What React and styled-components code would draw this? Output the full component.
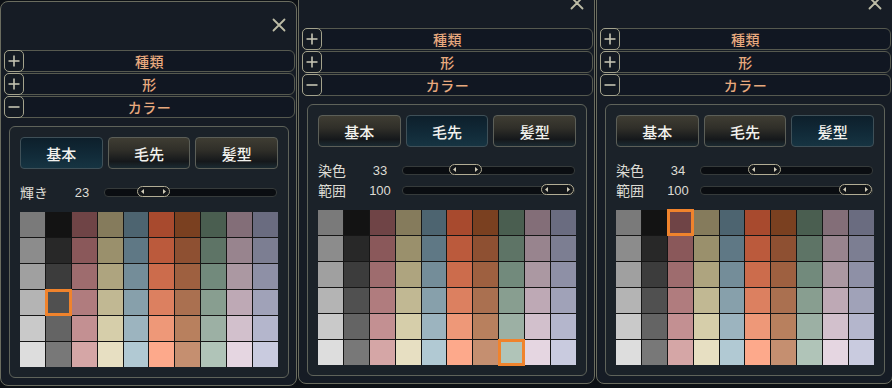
import React from 'react'
import styled, { createGlobalStyle } from 'styled-components'

const GlobalStyle = createGlobalStyle`
  html, body {
    margin: 0;
    padding: 0;
    background: #0c1015;
    overflow: hidden;
  }
  body {
    font-family: "Noto Sans CJK JP", "Noto Sans", sans-serif;
  }
`

// columns of the colour grid, dark to light top to bottom
const palette = [
  ['#7a7a7a', '#8c8c8c', '#a0a0a0', '#b4b4b4', '#c9c9c9', '#dddddd'],
  ['#131313', '#282828', '#3c3c3c', '#505050', '#646464', '#787878'],
  ['#6f4446', '#8a585a', '#9e6c6e', '#b07c7e', '#c39092', '#d5a6a6'],
  ['#857b5c', '#9a906c', '#aea47f', '#c1b893', '#d6ceaa', '#e7dfc2'],
  ['#4d6470', '#5f7885', '#748d99', '#87a0ab', '#9cb4bf', '#b1c9d3'],
  ['#a84a2e', '#bb5a3c', '#cc6c4c', '#dc8060', '#ee9878', '#fda98b'],
  ['#7a4020', '#8e5032', '#9e6040', '#aa7050', '#b8805e', '#c58f70'],
  ['#4a5e50', '#5e7466', '#728a7c', '#889e90', '#9cb0a4', '#b0c4b8'],
  ['#836e78', '#98848e', '#ab98a2', '#bea9b5', '#d2c0cc', '#e5d6e1'],
  ['#6a6c80', '#7c7e92', '#8e90a6', '#a0a2b8', '#b4b6cc', '#c9cbdf'],
]

const sections = ['種類', '形', 'カラー']
const tabs = ['基本', '毛先', '髪型']

const panels = [
  { shift: 0, tab: 0, sliders: [{ label: '輝き', value: 23 }], selected: [3, 1] },
  {
    shift: -22,
    tab: 1,
    sliders: [
      { label: '染色', value: 33 },
      { label: '範囲', value: 100 },
    ],
    selected: [5, 7],
  },
  {
    shift: -22,
    tab: 2,
    sliders: [
      { label: '染色', value: 34 },
      { label: '範囲', value: 100 },
    ],
    selected: [0, 2],
  },
]

const CloseIcon = () => (
  <svg width="14" height="14" viewBox="0 0 14 14">
    <path d="M1.5 1.5 L12.5 12.5 M12.5 1.5 L1.5 12.5" stroke="#bdbca6" strokeWidth="1.8" strokeLinecap="round" />
  </svg>
)

const ToggleIcon = ({ open }) => (
  <svg width="12" height="12" viewBox="0 0 12 12">
    <path d="M0.5 6 H11.5" stroke="#c4c3b2" strokeWidth="1.6" />
    {!open && <path d="M6 0.5 V11.5" stroke="#c4c3b2" strokeWidth="1.6" />}
  </svg>
)

const ThumbArrows = () => (
  <svg width="31" height="9" viewBox="0 0 31 9">
    <path d="M6 2 L3 4.5 L6 7 Z" fill="#d2cdba" />
    <path d="M25 2 L28 4.5 L25 7 Z" fill="#d2cdba" />
  </svg>
)

const Slider = ({ label, value }) => (
  <SliderRow>
    <SliderLabel>{label}</SliderLabel>
    <SliderValue>{value}</SliderValue>
    <Track>
      <Thumb style={{ left: `calc((100% - 33px) * ${value / 100})` }}>
        <ThumbArrows />
      </Thumb>
    </Track>
  </SliderRow>
)

const Panel = ({ shift, tab, sliders, selected }) => (
  <Window $shift={shift}>
    <Header>
      <CloseButton>
        <CloseIcon />
      </CloseButton>
    </Header>
    <Sections>
      {sections.map((name, i) => (
        <SectionRow key={name}>
          <Toggle>
            <ToggleIcon open={i === 2} />
          </Toggle>
          <SectionLabel>{name}</SectionLabel>
        </SectionRow>
      ))}
    </Sections>
    <ColorBox>
      <Tabs>
        {tabs.map((t, i) => (
          <Tab key={t} $active={i === tab}>
            {t}
          </Tab>
        ))}
      </Tabs>
      <Sliders>
        {sliders.map((s) => (
          <Slider key={s.label} {...s} />
        ))}
      </Sliders>
      <Swatches>
        {[0, 1, 2, 3, 4, 5].map((r) =>
          palette.map((col, c) => (
            <Swatch
              key={`${r}-${c}`}
              $color={col[r]}
              $selected={selected[0] === r && selected[1] === c}
            />
          ))
        )}
      </Swatches>
    </ColorBox>
  </Window>
)

const App = () => (
  <>
    <GlobalStyle />
    <Page>
      {panels.map((p, i) => (
        <Panel key={i} {...p} />
      ))}
    </Page>
  </>
)

const Page = styled.div`
  display: flex;
  align-items: flex-start;
  gap: 1px;
  padding-top: 1px;
  width: 900px;
  height: 388px;
`

const Window = styled.section`
  flex: 0 0 297px;
  box-sizing: border-box;
  margin-top: ${(p) => p.$shift}px;
  border: 1px solid #6a6c5f;
  border-radius: 8px;
  background: #161c25;
  padding: 0 1px 7px 3px;
`

const Header = styled.div`
  height: 48px;
  display: flex;
  justify-content: flex-end;
  align-items: flex-start;
`

const CloseButton = styled.div`
  margin-top: 11px;
  margin-right: 9px;
  width: 14px;
  height: 14px;
`

const Sections = styled.div`
  display: flex;
  flex-direction: column;
  gap: 1px;
`

const SectionRow = styled.div`
  position: relative;
  height: 22px;
  box-sizing: border-box;
  border: 1px solid #56594f;
  border-radius: 6px;
  background: #111722;
  display: flex;
  align-items: center;
  justify-content: center;
`

const Toggle = styled.div`
  position: absolute;
  left: -1px;
  top: -1px;
  width: 20px;
  height: 22px;
  box-sizing: border-box;
  border: 1.5px solid #a3a28c;
  border-radius: 5px;
  background: #141a22;
  display: flex;
  align-items: center;
  justify-content: center;
`

const SectionLabel = styled.span`
  font-size: 14px;
  font-weight: 500;
  color: #e8a97e;
  letter-spacing: 0.5px;
  line-height: 1;
`

const ColorBox = styled.div`
  margin: 8px 6px 0 5px;
  border: 1px solid #5f635a;
  border-radius: 6px;
  background: #1b2229;
  padding: 10px 10px 10px 10px;
`

const Tabs = styled.div`
  display: grid;
  grid-template-columns: repeat(3, 1fr);
  gap: 5px;
`

const Tab = styled.div`
  height: 32px;
  box-sizing: border-box;
  border: 1px solid ${(p) => (p.$active ? '#3f5058' : '#5c5f58')};
  border-radius: 4px;
  display: flex;
  align-items: center;
  justify-content: center;
  font-size: 15px;
  font-weight: 500;
  color: #f2f2ee;
  background: ${(p) =>
    p.$active
      ? 'linear-gradient(180deg, #0d1f2b 0%, #112a38 55%, #163442 100%)'
      : 'linear-gradient(180deg, #3f3d33 0%, #302f29 40%, #15181b 78%, #1b2a31 100%)'};
`

const Sliders = styled.div`
  margin-top: 13px;
  display: flex;
  flex-direction: column;
`

const SliderRow = styled.div`
  height: 20px;
  display: flex;
  align-items: center;
`

const SliderLabel = styled.span`
  width: 46px;
  font-size: 14px;
  color: #dddcd4;
`

const SliderValue = styled.span`
  width: 32px;
  text-align: center;
  font-family: "Liberation Sans", sans-serif;
  font-size: 13px;
  color: #dddcd4;
`

const Track = styled.div`
  position: relative;
  flex: 1;
  margin-left: 6px;
  margin-right: 1px;
  height: 7px;
  border: 1px solid #363b3b;
  border-radius: 4px;
  background: #0a0d11;
`

const Thumb = styled.div`
  position: absolute;
  top: -3px;
  width: 33px;
  height: 11px;
  box-sizing: border-box;
  border: 1px solid #b2ad95;
  border-radius: 6px;
  background: #14171a;
  display: flex;
  align-items: center;
  justify-content: center;
`

const Swatches = styled.div`
  margin-top: 10px;
  display: grid;
  grid-template-columns: repeat(10, 1fr);
  grid-auto-rows: 25px;
  gap: 1px;
  background: #161616;
`

const Swatch = styled.div`
  position: relative;
  background: ${(p) => p.$color};
  ${(p) =>
    p.$selected &&
    `
    z-index: 1;
    outline: 3px solid #f0832c;
    outline-offset: -2px;
  `}
`

export default App
